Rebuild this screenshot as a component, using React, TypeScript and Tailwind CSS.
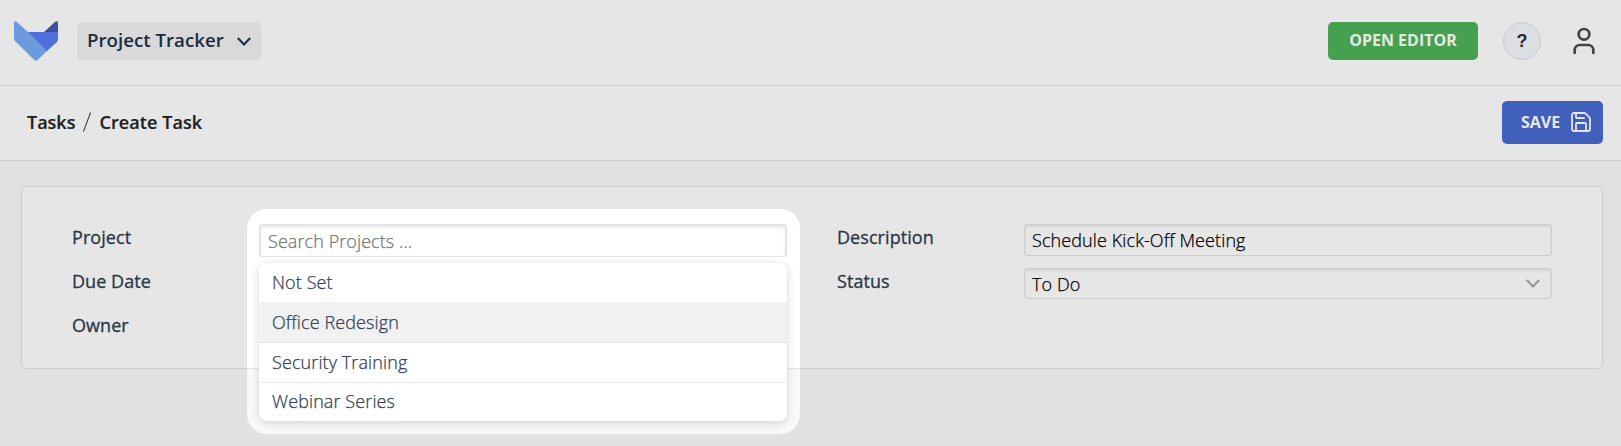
import React from "react";
import { Save, User } from "lucide-react";

const options = ["Not Set", "Office Redesign", "Security Training", "Webinar Series"];

function Logo() {
  return (
    <svg className="ml-3.5 mt-[21px] h-10 w-11 shrink-0" viewBox="0 0 44 40">
      <path d="M30 11 L41.5 .6 Q44 -.7 44 2 V11 Z" fill="#404f99" />
      <path d="M12 11 H44 V18 Q44 20 42.7 21.3 L32.5 30.5 L18 20 Z" fill="#4f6fdb" />
      <path d="M0 2 Q0 -1 2.6 .8 L14 11 L33 30 L24 38.5 Q22 40.6 20 38.8 L1.5 20.5 Q0 19 0 17 Z" fill="#6b9add" />
    </svg>
  );
}

function Chevron({ className }: { className: string }) {
  return (
    <svg className={className} viewBox="0 0 14 9">
      <path d="M.8 1 L7 7.4 L13.2 1" fill="none" stroke="currentColor" strokeWidth="2.1" />
    </svg>
  );
}

function Header() {
  return (
    <header className="flex h-[86px] items-start border-b border-[#cdcdcd] bg-[#e6e6e6]">
      <Logo />
      <button className="ml-[19px] mt-[22px] flex h-[38px] w-[184px] items-center justify-between rounded-[5px] bg-[#d9d9d9] pl-2.5 pr-[10px] text-[18.7px] font-semibold text-[#1a2b42]">
        <span className="whitespace-nowrap pb-[2px]">Project Tracker</span>
        <Chevron className="mt-px h-[9px] w-[14px]" />
      </button>
      <button className="ml-auto mt-[22px] h-[38px] w-[150px] rounded-[5px] bg-[#45a14f] pb-[2px] text-[16px] font-bold text-[#e6e6e6]">
        OPEN EDITOR
      </button>
      <button className="ml-[25px] mt-[22px] size-[38px] rounded-full border border-[#c9cad0] bg-[#dddee4] pt-px font-['Liberation_Sans',sans-serif] text-[18px] font-bold text-[#2a2a2a]">
        ?
      </button>
      <User className="ml-[27px] mr-[21px] mt-[25px] size-[32px] text-[#444]" strokeWidth={2} />
    </header>
  );
}

function Toolbar() {
  return (
    <div className="flex h-[75px] items-center border-b border-[#cdcdcd] bg-[#e6e6e6] pb-[2px] pl-[27px] pr-[18px]">
      <nav className="flex items-center text-[18px] font-semibold text-[#1f1f1f] [-webkit-text-stroke:0.2px_#1f1f1f]">
        <span>Tasks</span>
        <svg className="mx-[7px] h-5 w-[10px]" viewBox="0 0 10 20">
          <path d="M8.5 .5 L1.5 19.5" stroke="#444" strokeWidth="1.1" />
        </svg>
        <span className="tracking-[0.08px]">Create Task</span>
      </nav>
      <button className="ml-auto flex h-[43px] w-[101px] items-center rounded-[5px] bg-[#4060bb] pl-[19px] text-[16px] font-bold text-[#e6e6e6]">
        <span className="pb-px">SAVE</span>
        <Save className="ml-[9px] size-6" strokeWidth={1.8} />
      </button>
    </div>
  );
}

function Label({ children }: { children: React.ReactNode }) {
  return (
    <div className="h-11 pt-2 text-[18px] font-medium leading-[28px] tracking-[0.06px] text-[#2a3745] [-webkit-text-stroke:0.3px_#2a3745]">
      {children}
    </div>
  );
}

function ProjectPicker() {
  return (
    <div className="absolute left-[225px] top-[22px] h-[225px] w-[553px] overflow-hidden rounded-[20px] bg-[#f9f9f9]">
      <div className="h-[160px] border-b border-[#e4e4e4] bg-white" />
      <div className="absolute left-3 right-[13px] top-[15px]">
        <div className="h-[33px] rounded-[3px] border-x-2 border-b border-t-2 border-[#e4e4e4] bg-white">
          <div className="h-[30px] rounded-[2px] pl-[7px] text-[18px] font-light leading-[30px] tracking-[0.08px] text-[#757575] shadow-[inset_0_2px_3px_rgba(0,0,0,0.08)] [-webkit-text-stroke:0.25px_#757575]">
            Search Projects ...
          </div>
        </div>
        <ul className="mt-1.5 overflow-hidden rounded-lg bg-white text-[18px] font-light tracking-[0.1px] text-[#334155] shadow-[0_2px_8px_rgba(0,0,0,0.16)] [-webkit-text-stroke:0.25px_#334155]">
          {options.map((option) => (
            <li
              key={option}
              className="h-10 border-b border-[#ececec] pl-[13px] leading-[39px] first:h-[39px] first:border-0 last:h-[38px] last:border-0 last:leading-[37px] nth-2:h-[41px] nth-2:border-[#e0e0e0] nth-2:bg-[#f1f1f1] nth-2:leading-[41px]"
            >
              {option}
            </li>
          ))}
        </ul>
      </div>
    </div>
  );
}

export default function App() {
  return (
    <div className="h-[446px] w-[1621px] overflow-hidden bg-[#e1e1e1] font-['Open_Sans',sans-serif]">
      <Header />
      <Toolbar />
      <main className="pl-[21px] pt-[25px]">
        <section className="relative flex h-[183px] w-[1582px] rounded-[5px] border border-[#cdcdcd] bg-[#e6e6e6] pt-[28px]">
          <div className="ml-[50px] w-[765px]">
            <Label>Project</Label>
            <Label>Due Date</Label>
            <Label>Owner</Label>
          </div>
          <div className="w-[187px]">
            <Label>Description</Label>
            <Label>Status</Label>
          </div>
          <div className="flex w-[528px] flex-col gap-3 pt-[9px] text-[18px] font-light tracking-[0.1px] text-black [-webkit-text-stroke:0.25px_#000]">
            <div className="h-8 rounded-[3px] border border-[#cbcbcb] pl-[7px] leading-[31px] shadow-[inset_0_2px_3px_rgba(0,0,0,0.08)]">
              Schedule Kick-Off Meeting
            </div>
            <div className="flex h-[31px] items-center justify-between rounded-[3px] border border-[#cbcbcb] pl-[7px] pr-[11px] shadow-[inset_0_2px_3px_rgba(0,0,0,0.08)]">
              <span className="pt-px">To Do</span>
              <Chevron className="h-[9px] w-[14px] text-[#979797]" />
            </div>
          </div>
          <ProjectPicker />
        </section>
      </main>
    </div>
  );
}
